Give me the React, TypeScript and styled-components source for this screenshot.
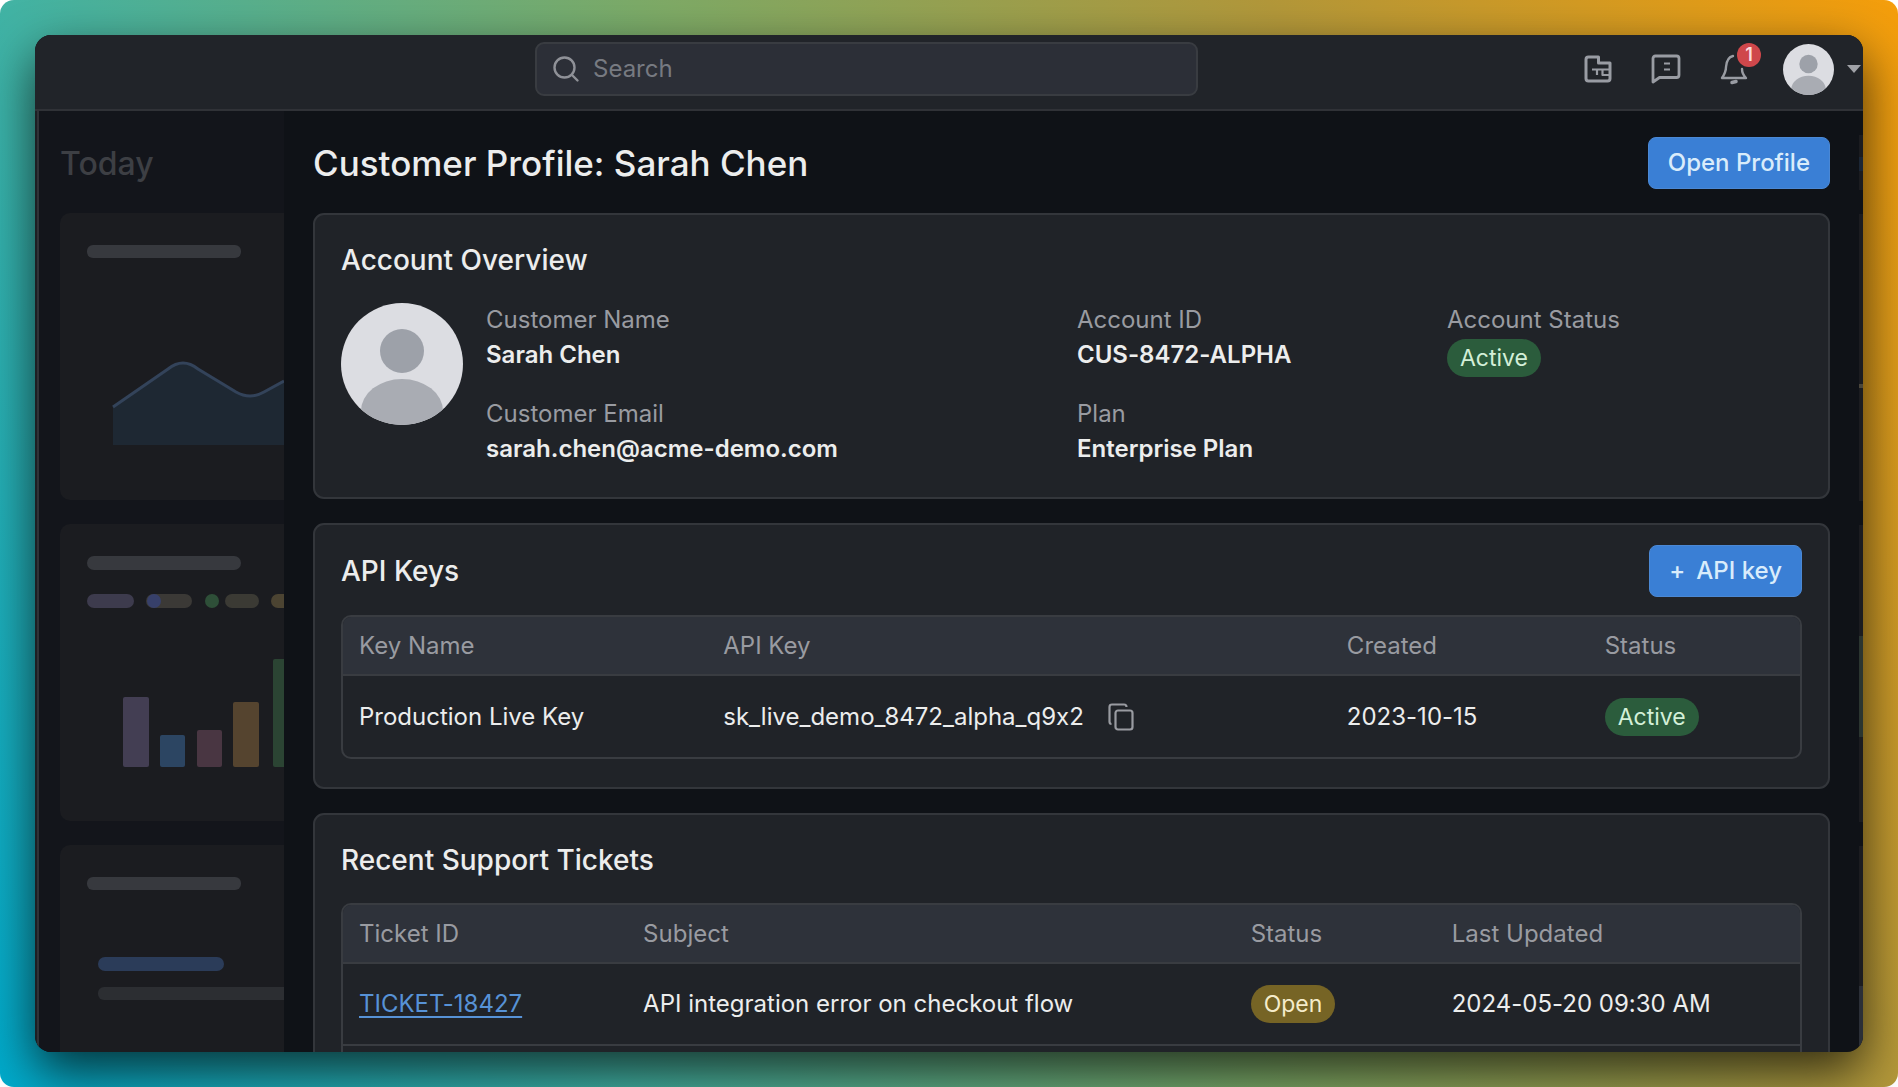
import React from "react";
import styled, { createGlobalStyle } from "styled-components";

const colors = {
  header: "#212429",
  body: "#0f1217",
  rail: "#13151b",
  railCard: "#1b1c20",
  card: "#202328",
  cardBorder: "#33363b",
  field: "#2c2f37",
  tableHead: "#2e323a",
  line: "#393c41",
  text: "#eceded",
  muted: "#999ba1",
  blue: "#3a7fd5",
};

const GlobalStyle = createGlobalStyle`
  * { box-sizing: border-box; }
  html, body { margin: 0; height: 100%; }
  #root { height: 100%; }
  body {
    background: #fff;
    color: ${colors.text};
    font-family: Inter, "Liberation Sans", sans-serif;
    font-size: 24px;
    line-height: 32px;
    font-feature-settings: "calt" 0;
  }
  button, input { font: inherit; color: inherit; }
  h1, h2, dl, dd { margin: 0; }
`;

const Backdrop = styled.div`
  height: 100vh;
  padding: 35px;
  border-radius: 14px;
  background: linear-gradient(60deg, #00aacc 0%, #42b3a4 25%, #7cab68 50%, #b3983a 75%, #f59e0b 100%);
`;

const Window = styled.div`
  display: flex;
  flex-direction: column;
  height: 100%;
  overflow: hidden;
  border-radius: 16px;
  background: ${colors.body};
  box-shadow: 0 20px 50px rgba(0, 0, 0, 0.7);
`;

const Header = styled.header`
  display: grid;
  grid-template-columns: 500px minmax(200px, 663px) 1fr;
  align-items: center;
  flex: none;
  height: 76px;
  padding-bottom: 6px;
  padding-right: 2px;
  border-bottom: 2px solid #303237;
  background: ${colors.header};
`;

const SearchBox = styled.label`
  grid-column: 2;
  display: flex;
  align-items: center;
  gap: 13px;
  height: 54px;
  padding: 0 15px;
  border: 2px solid ${colors.line};
  border-radius: 9px;
  background: ${colors.field};
  color: #8f9197;
`;

const SearchInput = styled.input`
  flex: 1;
  min-width: 0;
  padding: 0;
  border: 0;
  outline: 0;
  background: none;
  &::placeholder { color: #777a81; opacity: 1; }
`;

const Tools = styled.nav`
  display: flex;
  justify-content: flex-end;
  align-items: center;
`;

const IconButton = styled.button`
  position: relative;
  display: flex;
  align-items: center;
  justify-content: center;
  width: 68px;
  height: 52px;
  padding: 0;
  border: 0;
  background: none;
  color: #999ca3;
`;

const Badge = styled.span`
  position: absolute;
  top: 0;
  right: 7px;
  width: 24px;
  height: 24px;
  border-radius: 50%;
  background: #cf474b;
  color: #fbdcdc;
  font-size: 18px;
  font-weight: 600;
  line-height: 24px;
  text-align: center;
`;

const UserButton = styled.button`
  display: flex;
  align-items: center;
  gap: 13px;
  margin-left: 15px;
  padding: 0;
  border: 0;
  background: none;
`;

const Body = styled.div`
  display: grid;
  grid-template-columns: 4px 245px minmax(0, 1fr) 4px;
  flex: 1;
  min-height: 0;
`;

const Edge = styled.div`
  border-right: 2px solid #303237;
  background: #1d1f23;
`;

const FarEdge = styled.div`
  display: flex;
  flex-direction: column;
  gap: 24px;
  padding-top: 24px;
  overflow: hidden;
`;

const Sliver = styled.div<{ $h: number; $from: number; $to: number; $accent: string }>`
  flex: none;
  height: ${(p) => p.$h}px;
  background: linear-gradient(
    ${colors.railCard} ${(p) => p.$from}px,
    ${(p) => p.$accent} ${(p) => p.$from}px,
    ${(p) => p.$accent} ${(p) => p.$to}px,
    ${colors.railCard} ${(p) => p.$to}px
  );
`;

const Rail = styled.aside`
  display: flex;
  flex-direction: column;
  gap: 24px;
  min-height: 0;
  padding: 32px 0 0 21px;
  overflow: hidden;
  background: ${colors.rail};
`;

const RailTitle = styled.h2`
  height: 46px;
  flex: none;
  color: #3d3f44;
  font-size: 32px;
  font-weight: 500;
  line-height: 42px;
`;

const RailCard = styled.section<{ $h: number }>`
  flex: none;
  height: ${(p) => p.$h}px;
  border-radius: 10px 0 0 10px;
  background: ${colors.railCard};
  svg { display: block; }
`;

const Main = styled.main`
  display: flex;
  flex-direction: column;
  gap: 24px;
  min-width: 0;
  min-height: 0;
  padding: 26px 29px 0;
  overflow: hidden;
`;

const Row = styled.div`
  display: flex;
  align-items: center;
  justify-content: space-between;
`;

const PageTitle = styled.h1`
  font-size: 35px;
  font-weight: 500;
  line-height: 52px;
`;

const Primary = styled.button`
  display: flex;
  align-items: center;
  gap: 11px;
  height: 52px;
  padding: 0 19px;
  border: 1px solid #4b88d4;
  border-radius: 8px;
  background: ${colors.blue};
  color: #d9ecfb;
  font-weight: 500;
`;

const Card = styled.section`
  flex: none;
  padding: 20px 26px 28px;
  border: 2px solid ${colors.cardBorder};
  border-radius: 11px;
  background: ${colors.card};
`;

const CardTitle = styled.h2`
  font-size: 28px;
  font-weight: 500;
  line-height: 50px;
`;

const Overview = styled.div`
  display: grid;
  grid-template-columns: 122px minmax(0, 1fr);
  gap: 23px;
  padding: 18px 0 2px;
`;

const Fields = styled.dl`
  display: grid;
  grid-template-columns: 591fr 370fr 355fr;
  row-gap: 20px;
`;

const Term = styled.dt`
  color: ${colors.muted};
  line-height: 34px;
`;

const Value = styled.dd`
  font-weight: 600;
  line-height: 36px;
`;

const PillValue = styled(Value)`
  padding-top: 2px;
`;

const Pill = styled.span<{ $tone: "green" | "amber" }>`
  display: inline-block;
  padding: 0 13px;
  border-radius: 19px;
  background: ${(p) => (p.$tone === "green" ? "#2b5c3c" : "#766425")};
  color: ${(p) => (p.$tone === "green" ? "#d3efd8" : "#f5eccb")};
  font-size: 23px;
  font-weight: 400;
  line-height: 38px;
`;

const TableFrame = styled.div`
  margin-top: 18px;
  border: 2px solid ${colors.line};
  border-radius: 10px;
  overflow: hidden;
`;

const Table = styled.table`
  width: 100%;
  border-collapse: collapse;
  table-layout: fixed;
  text-align: left;
  white-space: nowrap;
  th {
    height: 58px;
    padding: 0 16px;
    background: ${colors.tableHead};
    color: ${colors.muted};
    font-weight: 400;
  }
  td {
    height: 82px;
    padding: 0 16px;
    border-top: 2px solid ${colors.line};
  }
`;

const Col = styled.col<{ $share: number }>`
  width: ${(p) => p.$share}%;
`;

const CopyRow = styled.div`
  display: flex;
  align-items: center;
  gap: 24px;
`;

const CopyButton = styled.button`
  display: flex;
  padding: 0;
  border: 0;
  background: none;
  color: #999ba1;
`;

const TicketLink = styled.a`
  color: #5792d6;
  text-underline-offset: 4px;
  text-decoration-thickness: 2px;
`;

const Person = ({ size, id }: { size: number; id: string }) => (
  <svg width={size} height={size} viewBox="0 0 122 122" aria-hidden="true">
    <defs>
      <clipPath id={id}><circle cx="61" cy="61" r="61" /></clipPath>
    </defs>
    <g clipPath={`url(#${id})`}>
      <rect width="122" height="122" fill="#dcdde2" />
      <circle cx="61" cy="48" r="22" fill="#9da1a9" />
      <ellipse cx="61" cy="108" rx="41" ry="32" fill="#a9acb3" />
    </g>
  </svg>
);

export default function App() {
  return (
    <>
      <GlobalStyle />
      <Backdrop>
        <Window>
          <Header>
            <SearchBox>
              <svg width="28" height="28" viewBox="0 0 28 28" fill="none" stroke="currentColor" strokeWidth="2.4" strokeLinecap="round" aria-hidden="true">
                <circle cx="12.5" cy="12.5" r="10" />
                <path d="M20 20l5.500 5.500" />
              </svg>
              <SearchInput type="text" placeholder="Search" aria-label="Search" />
            </SearchBox>
            <Tools aria-label="Tools">
              <IconButton aria-label="Documents">
                <svg width="28" height="28" viewBox="0 0 28 28" fill="none" stroke="currentColor" strokeWidth="3" strokeLinejoin="round" aria-hidden="true">
                  <path d="M4.500 2H14.500V8H26V23.500q0 2.500-2.500 2.500H4.500q-2.500 0-2.500-2.500V4.500q0-2.500 2.500-2.500z" />
                  <path d="M8 14.500H26M13 15v5M18.500 15v5H26" strokeWidth="2.2" />
                </svg>
              </IconButton>
              <IconButton aria-label="Messages">
                <svg width="30" height="30" viewBox="0 0 30 30" fill="none" stroke="currentColor" strokeWidth="2.8" strokeLinejoin="round" aria-hidden="true">
                  <path d="M2 28V4.500Q2 2 4.500 2H25.500Q28 2 28 4.500V21Q28 23.500 25.500 23.500H8.500z" />
                  <path d="M13 9.500h6M13 15.500h6" strokeWidth="2" />
                </svg>
              </IconButton>
              <IconButton aria-label="Notifications, 1 new">
                <svg width="28" height="32" viewBox="0 0 28 32" fill="none" stroke="currentColor" strokeWidth="2.4" strokeLinejoin="round" strokeLinecap="round" aria-hidden="true">
                  <path d="M13 3C8 4 6.500 8 6 14c0 5-2 8-4 11h24c-2-2-4-5-4-9" />
                  <path d="M12 29.500l4-1" strokeWidth="3.500" />
                </svg>
                <Badge>1</Badge>
              </IconButton>
              <UserButton aria-label="Account menu">
                <Person size={51} id="header-avatar" />
                <svg width="14" height="9" viewBox="0 0 14 9" aria-hidden="true"><path d="M0 0h14L7 8z" fill="#a0a2a7" /></svg>
              </UserButton>
            </Tools>
          </Header>
          <Body>
            <Edge />
            <Rail>
              <RailTitle>Today</RailTitle>
              <RailCard $h={287}>
                <svg width="224" height="287" viewBox="0 0 224 287" aria-hidden="true">
                  <rect x="27" y="32" width="154" height="13" rx="6" fill="#37393e" />
                  <path d="M53 194L108 156Q123 144 138 156L176 179Q190 187 204 179L224 168V232H53z" fill="#1e2833" />
                  <path d="M53 194L108 156Q123 144 138 156L176 179Q190 187 204 179L224 168" fill="none" stroke="#33435a" strokeWidth="3" />
                </svg>
              </RailCard>
              <RailCard $h={297}>
                <svg width="224" height="297" viewBox="0 0 224 297" aria-hidden="true">
                  <rect x="27" y="32" width="154" height="14" rx="7" fill="#37393e" />
                  <rect x="27" y="70" width="47" height="14" rx="7" fill="#3d3b4d" />
                  <rect x="86" y="70" width="46" height="14" rx="7" fill="#3b3936" />
                  <circle cx="94" cy="77" r="7" fill="#37406a" />
                  <circle cx="152" cy="77" r="7" fill="#2e4f38" />
                  <rect x="165" y="70" width="34" height="14" rx="7" fill="#3b3a34" />
                  <rect x="211" y="70" width="34" height="14" rx="7" fill="#4c4432" />
                  <rect x="63" y="173" width="26" height="70" rx="2" fill="#433e53" />
                  <rect x="100" y="211" width="25" height="32" rx="2" fill="#2c4562" />
                  <rect x="137" y="206" width="25" height="37" rx="2" fill="#493642" />
                  <rect x="173" y="178" width="26" height="65" rx="2" fill="#55442f" />
                  <rect x="213" y="135" width="26" height="108" rx="2" fill="#2b4433" />
                </svg>
              </RailCard>
              <RailCard $h={297}>
                <svg width="224" height="297" viewBox="0 0 224 297" aria-hidden="true">
                  <rect x="27" y="32" width="154" height="13" rx="6" fill="#37393e" />
                  <rect x="38" y="112" width="126" height="14" rx="7" fill="#2b3c59" />
                  <rect x="38" y="142" width="200" height="13" rx="6" fill="#2c2e32" />
                </svg>
              </RailCard>
            </Rail>
            <Main>
              <Row>
                <PageTitle>Customer Profile: Sarah Chen</PageTitle>
                <Primary type="button">Open Profile</Primary>
              </Row>
              <Card>
                <CardTitle>Account Overview</CardTitle>
                <Overview>
                  <Person size={122} id="profile-avatar" />
                  <Fields>
                    <div><Term>Customer Name</Term><Value>Sarah Chen</Value></div>
                    <div><Term>Account ID</Term><Value>CUS-8472-ALPHA</Value></div>
                    <div><Term>Account Status</Term><PillValue><Pill $tone="green">Active</Pill></PillValue></div>
                    <div><Term>Customer Email</Term><Value>sarah.chen@acme-demo.com</Value></div>
                    <div><Term>Plan</Term><Value>Enterprise Plan</Value></div>
                  </Fields>
                </Overview>
              </Card>
              <Card>
                <Row>
                  <CardTitle>API Keys</CardTitle>
                  <Primary type="button"><span>+</span><span>API key</span></Primary>
                </Row>
                <TableFrame>
                  <Table>
                    <colgroup>
                      <Col $share={25} /><Col $share={42.8} /><Col $share={17.7} /><Col $share={14.5} />
                    </colgroup>
                    <thead>
                      <tr><th>Key Name</th><th>API Key</th><th>Created</th><th>Status</th></tr>
                    </thead>
                    <tbody>
                      <tr>
                        <td>Production Live Key</td>
                        <td>
                          <CopyRow>
                            sk_live_demo_8472_alpha_q9x2
                            <CopyButton type="button" aria-label="Copy API key">
                              <svg width="26" height="28" viewBox="0 0 26 28" fill="none" stroke="currentColor" strokeWidth="2.2" aria-hidden="true">
                                <rect x="7.500" y="7.500" width="17" height="19" rx="2.500" />
                                <path d="M3.500 21q-2 0-2-2.500V4q0-2.500 2.500-2.500h12q2.500 0 2.500 2.500" />
                              </svg>
                            </CopyButton>
                          </CopyRow>
                        </td>
                        <td>2023-10-15</td>
                        <td><Pill $tone="green">Active</Pill></td>
                      </tr>
                    </tbody>
                  </Table>
                </TableFrame>
              </Card>
              <Card>
                <CardTitle>Recent Support Tickets</CardTitle>
                <TableFrame>
                  <Table>
                    <colgroup>
                      <Col $share={19.5} /><Col $share={41.7} /><Col $share={13.8} /><Col $share={25} />
                    </colgroup>
                    <thead>
                      <tr><th>Ticket ID</th><th>Subject</th><th>Status</th><th>Last Updated</th></tr>
                    </thead>
                    <tbody>
                      <tr>
                        <td><TicketLink href="#ticket">TICKET-18427</TicketLink></td>
                        <td>API integration error on checkout flow</td>
                        <td><Pill $tone="amber">Open</Pill></td>
                        <td>2024-05-20 09:30 AM</td>
                      </tr>
                      <tr><td colSpan={4} /></tr>
                    </tbody>
                  </Table>
                </TableFrame>
              </Card>
            </Main>
            <FarEdge>
              <Sliver $h={55} $from={22} $to={36} $accent="#1b2635" />
              <Sliver $h={287} $from={170} $to={174} $accent="#4a463b" />
              <Sliver $h={297} $from={111} $to={212} $accent="#2b3530" />
              <Sliver $h={297} $from={140} $to={297} $accent="#2b2f37" />
            </FarEdge>
          </Body>
        </Window>
      </Backdrop>
    </>
  );
}
